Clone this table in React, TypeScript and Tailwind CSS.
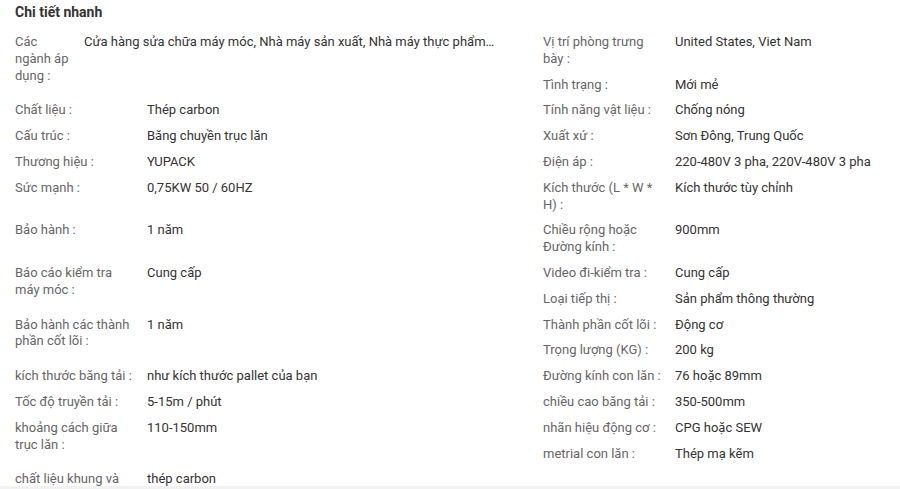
import React from "react";

type Spec = { label: string; value: string; span?: boolean; narrow?: boolean };

// order follows the page: left / right cells flow into a two column grid
const specs: Spec[] = [
  {
    label: "Các ngành áp dụng :",
    value: "Cửa hàng sửa chữa máy móc, Nhà máy sản xuất, Nhà máy thực phẩm…",
    span: true,
    narrow: true,
  },
  { label: "Vị trí phòng trưng bày :", value: "United States, Viet Nam" },
  { label: "Tình trạng :", value: "Mới mẻ" },
  { label: "Chất liệu :", value: "Thép carbon" },
  { label: "Tính năng vật liệu :", value: "Chống nóng" },
  { label: "Cấu trúc :", value: "Băng chuyền trục lăn" },
  { label: "Xuất xứ :", value: "Sơn Đông, Trung Quốc" },
  { label: "Thương hiệu :", value: "YUPACK" },
  { label: "Điện áp :", value: "220-480V 3 pha, 220V-480V 3 pha" },
  { label: "Sức mạnh :", value: "0,75KW 50 / 60HZ" },
  { label: "Kích thước (L * W * H) :", value: "Kích thước tùy chỉnh" },
  { label: "Bảo hành :", value: "1 năm" },
  { label: "Chiều rộng hoặc Đường kính :", value: "900mm" },
  { label: "Báo cáo kiểm tra máy móc :", value: "Cung cấp", span: true },
  { label: "Video đi-kiểm tra :", value: "Cung cấp" },
  { label: "Loại tiếp thị :", value: "Sản phẩm thông thường" },
  { label: "Bảo hành các thành phần cốt lõi :", value: "1 năm", span: true },
  { label: "Thành phần cốt lõi :", value: "Động cơ" },
  { label: "Trọng lượng (KG) :", value: "200 kg" },
  { label: "kích thước băng tải :", value: "như kích thước pallet của bạn" },
  { label: "Đường kính con lăn :", value: "76 hoặc 89mm" },
  { label: "Tốc độ truyền tải :", value: "5-15m / phút" },
  { label: "chiều cao băng tải :", value: "350-500mm" },
  { label: "khoảng cách giữa trục lăn :", value: "110-150mm", span: true },
  { label: "nhãn hiệu động cơ :", value: "CPG hoặc SEW" },
  { label: "metrial con lăn :", value: "Thép mạ kẽm" },
  // the rest of this label sits below the fold
  { label: "chất liệu khung và", value: "thép carbon" },
];

const SpecRow = ({ spec }: { spec: Spec }) => (
  <div
    className={`flex pb-[9px] leading-[16.8px] ${spec.span ? "row-span-2" : ""}`}
  >
    <div
      className={`shrink-0 pr-[12px] text-[#666] ${
        spec.narrow ? "w-[69px]" : "w-[132px]"
      }`}
    >
      {spec.label}
    </div>
    <div className="whitespace-nowrap text-[#333]">{spec.value}</div>
  </div>
);

export default function App() {
  return (
    <div
      className="h-[489px] w-[900px] overflow-hidden bg-[#f2f2f2]"
      style={{ fontFamily: "Roboto, 'Noto Sans', sans-serif" }}
    >
      <div className="h-[486px] overflow-hidden bg-white px-[15px]">
        <h2 className="pt-[2px] pb-[12px] text-[14px] font-bold leading-[20px] text-[#333]">
          Chi tiết nhanh
        </h2>
        <div className="grid grid-cols-[528px_528px] text-[13px]">
          {specs.map((s) => (
            <SpecRow key={s.label} spec={s} />
          ))}
        </div>
      </div>
    </div>
  );
}
